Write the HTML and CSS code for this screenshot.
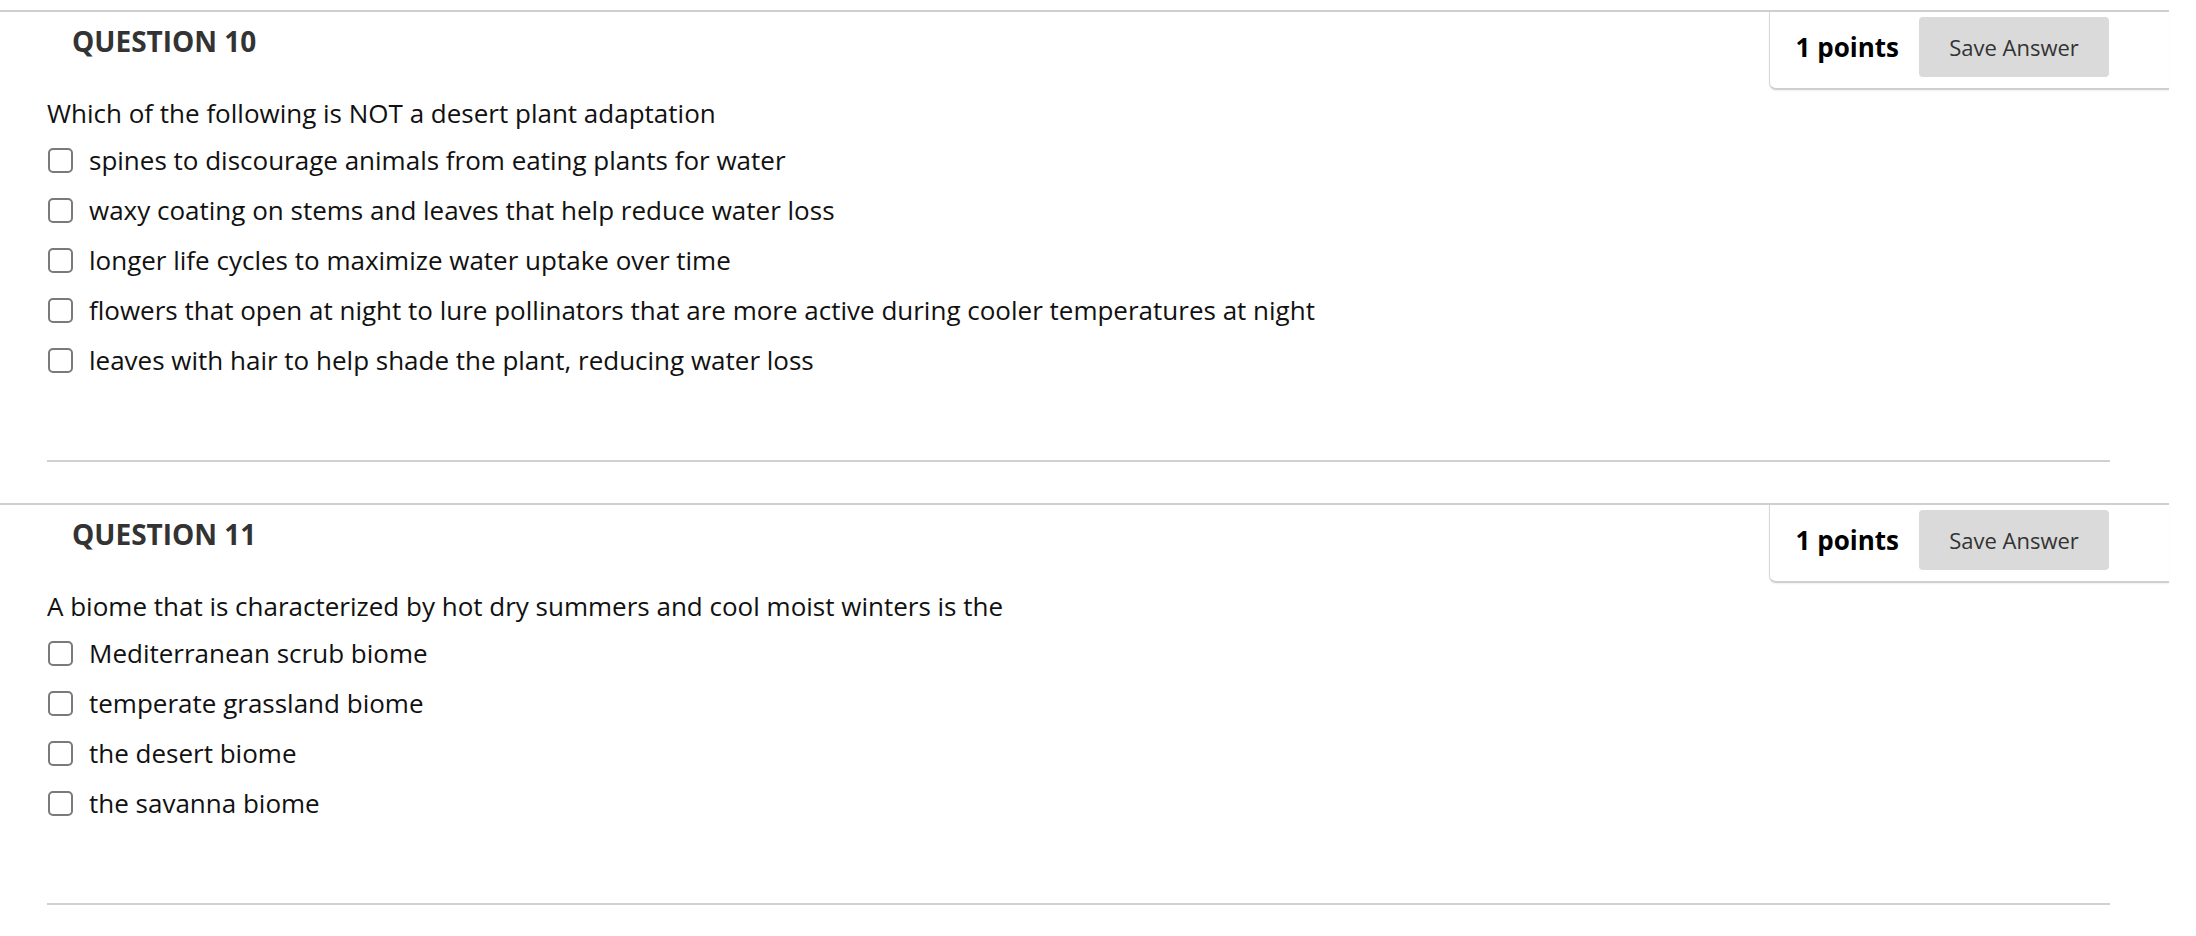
FILE: index.html
```html
<!DOCTYPE html>
<html lang="en">
<head>
<meta charset="utf-8">
<title>Quiz</title>
<link rel="stylesheet" href="styles.css">
</head>
<body>
<ol class="questions">
  <li class="question">
    <div class="q-head">
      <h3 class="q-title">QUESTION 10</h3>
      <div class="points-box">
        <span class="points">1 points</span>
        <button class="save" type="button">Save Answer</button>
      </div>
    </div>
    <div class="q-body">
      <p class="q-text">Which of the following is NOT a desert plant adaptation</p>
      <ul class="options">
        <li class="option"><span class="cb"></span><span class="opt-text">spines to discourage animals from eating plants for water</span></li>
        <li class="option"><span class="cb"></span><span class="opt-text">waxy coating on stems and leaves that help reduce water loss</span></li>
        <li class="option"><span class="cb"></span><span class="opt-text">longer life cycles to maximize water uptake over time</span></li>
        <li class="option"><span class="cb"></span><span class="opt-text">flowers that open at night to lure pollinators that are more active during cooler temperatures at night</span></li>
        <li class="option"><span class="cb"></span><span class="opt-text">leaves with hair to help shade the plant, reducing water loss</span></li>
      </ul>
      <div class="sep"></div>
    </div>
  </li>
  <li class="question">
    <div class="q-head">
      <h3 class="q-title">QUESTION 11</h3>
      <div class="points-box">
        <span class="points">1 points</span>
        <button class="save" type="button">Save Answer</button>
      </div>
    </div>
    <div class="q-body">
      <p class="q-text">A biome that is characterized by hot dry summers and cool moist winters is the</p>
      <ul class="options">
        <li class="option"><span class="cb"></span><span class="opt-text">Mediterranean scrub biome</span></li>
        <li class="option"><span class="cb"></span><span class="opt-text">temperate grassland biome</span></li>
        <li class="option"><span class="cb"></span><span class="opt-text">the desert biome</span></li>
        <li class="option"><span class="cb"></span><span class="opt-text">the savanna biome</span></li>
      </ul>
      <div class="sep"></div>
    </div>
  </li>
</ol>
</body>
</html>
```

FILE: styles.css
```css
html, body {
  margin: 0;
  padding: 0;
  background: #fff;
}

body {
  font-family: "Open Sans", "Liberation Sans", sans-serif;
  color: #111;
  width: 2196px;
  height: 936px;
  overflow: hidden;
}

.questions {
  list-style: none;
  margin: 0;
  padding: 10px 27px 0 0;
  display: flex;
  flex-direction: column;
  gap: 41px;
}

.question {
  border-top: 2px solid #cfcfcf;
}

.q-head {
  display: flex;
  justify-content: space-between;
  align-items: flex-start;
}

.q-title {
  margin: 15px 0 0 72px;
  font-size: 28px;
  line-height: 28px;
  font-weight: 700;
  color: #333;
}

.points-box {
  display: flex;
  align-items: center;
  gap: 20px;
  height: 78px;
  box-sizing: border-box;
  padding: 6px 60px 12px 26px;
  border-left: 1px solid #d6d6d6;
  border-bottom: 2px solid #cfcfcf;
  border-bottom-left-radius: 7px;
  box-shadow: 0 1px 2px rgba(0, 0, 0, 0.06);
}

.points {
  font-size: 26px;
  font-weight: 700;
  color: #000;
  white-space: nowrap;
}

.save {
  width: 190px;
  height: 60px;
  border: none;
  border-radius: 4px;
  background: #dadada;
  color: #333;
  font-family: "Open Sans", "Liberation Sans", sans-serif;
  font-size: 22px;
  padding: 0;
}

.q-body {
  padding: 5px 0 0 47px;
}

.q-text {
  margin: 0;
  font-size: 26px;
  line-height: 36px;
  color: #111;
}

.options {
  list-style: none;
  margin: 4px 0 0 0;
  padding: 0;
}

.option {
  display: flex;
  align-items: center;
  height: 50px;
  font-size: 26px;
  color: #111;
}

.cb {
  flex: none;
  width: 25px;
  height: 25px;
  box-sizing: border-box;
  border: 2px solid #7a7a7a;
  border-radius: 5px;
  margin: 0 16px 0 1px;
  background: #fff;
}

.sep {
  margin: 75px 59px 0 0;
  height: 2px;
  background: #d0d0d0;
}
```
